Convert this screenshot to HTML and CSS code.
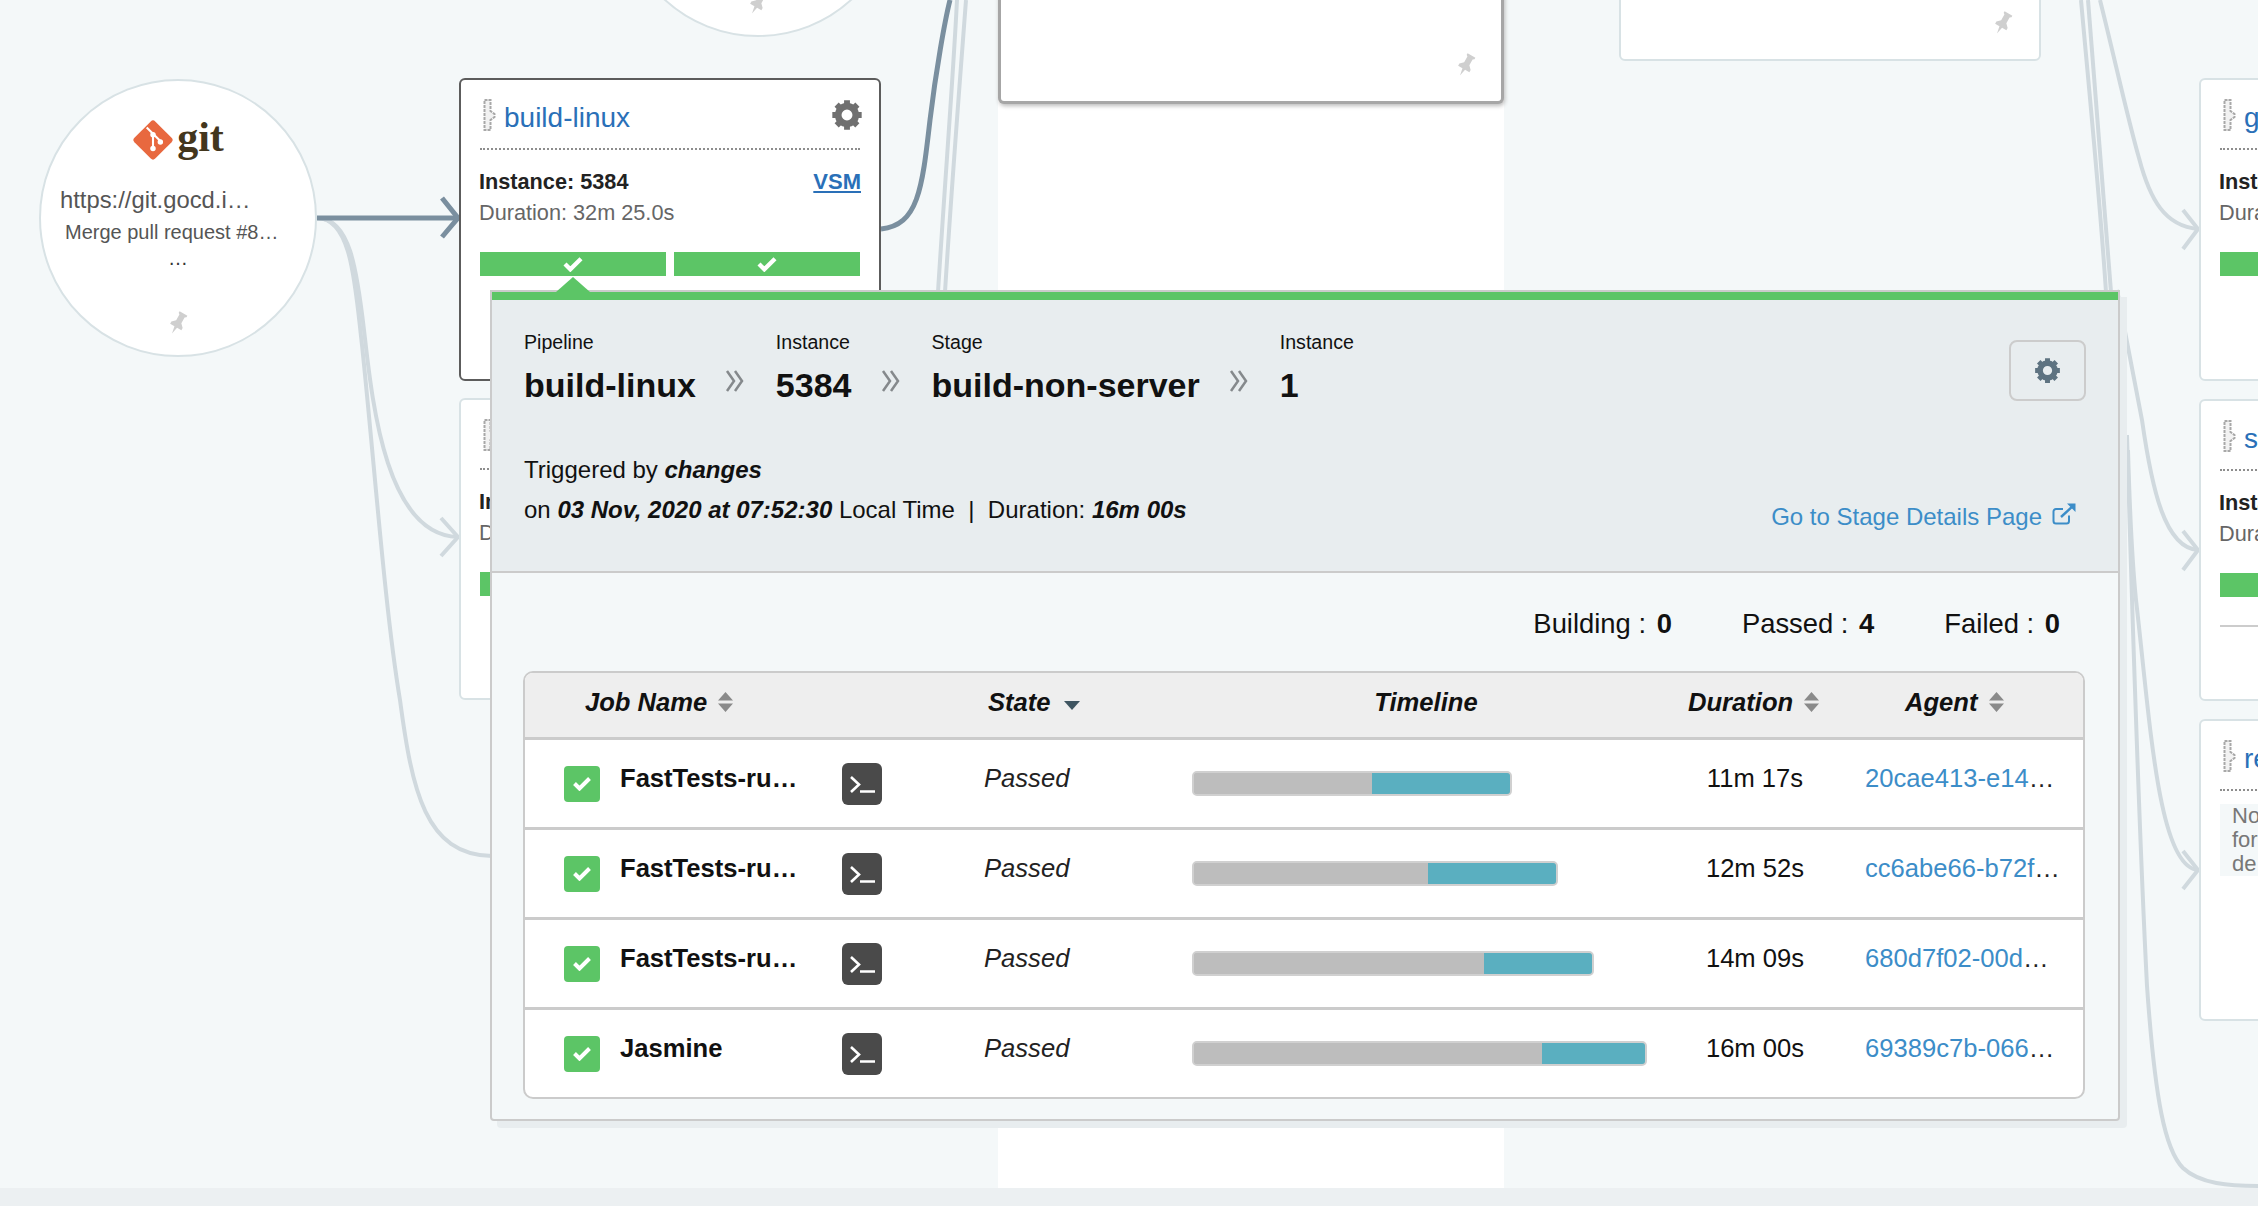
FILE: index.html
```html
<!DOCTYPE html>
<html lang="en">

<head>
  <meta charset="UTF-8" />
  <title>Value Stream Map</title>
  <link rel="stylesheet" href="styles.css">
</head>

<body>
  <svg class="defs" width="0" height="0">
    <symbol id="cog" viewBox="0 0 24 24">
      <circle cx="12" cy="12" r="6.6" fill="none" stroke="currentColor" stroke-width="5" />
      <g stroke="currentColor" stroke-width="4.4">
        <path d="M12 1v22M1 12h22M4.2 4.2l15.6 15.6M19.800 4.2L4.200 19.800" stroke-dasharray="5 12 5" />
      </g>
    </symbol>
    <symbol id="pin" viewBox="0 0 24 24">
      <path d="M7.500 1h9v1.800l-1.500 1.200v6.500l3.500 3.500v2.500h-5l-1.500 7.500-1.500-7.500h-5V14l3.500-3.500V4L7.500 2.800z" fill="currentColor" />
    </symbol>
    <symbol id="pipe" viewBox="0 0 13 32">
      <path d="M1.500 1h6v11l4 3v3l-4 3v10h-6z" fill="#f2f2f2" stroke="#a8a8a8" stroke-width="2" stroke-dasharray="3 1" />
    </symbol>
    <symbol id="check" viewBox="0 0 20 15">
      <path d="M2.500 7.500l5 5 10-10" fill="none" stroke="#fff" stroke-width="4" />
    </symbol>
    <symbol id="sort" viewBox="0 0 15 20">
      <path d="M7.500 0L15 8.500H0zM7.500 20L0 11.500h15z" fill="#8a8a8a" />
    </symbol>
    <symbol id="console" viewBox="0 0 40 42">
      <path d="M9 14l8 7.500-8 7.500M18 28.500h15" fill="none" stroke="#fff" stroke-width="2.600" />
    </symbol>
    <symbol id="chevrons" viewBox="0 0 20 24">
      <path d="M2 2l7 10-7 10M10 2l7 10-7 10" fill="none" stroke="#85898c" stroke-width="2.500" />
    </symbol>
  </svg>

  <div class="canvas">
    <div class="lane"></div>

    <svg class="edges" width="2258" height="1188">
      <g class="edge-light">
        <path d="M957 0C953 80 945 180 938 292" />
        <path d="M966 0C960 80 952 180 945 292" />
        <path d="M317 218C350 218 357 270 364 330C372 400 385 535 458 537" />
        <path d="M317 218C352 218 355 285 362 345C375 470 385 610 400 700C412 790 425 855 492 856" />
        <path d="M2081 0C2090 100 2100 200 2106 292" />
        <path d="M2088 0C2096 100 2104 200 2111 292" />
        <path d="M2100 0C2115 60 2128 120 2139 158C2150 200 2165 226 2198 229" />
        <path d="M2117 290C2125 330 2132 370 2142 420C2152 490 2165 548 2198 550" />
        <path d="M2128 450C2130 520 2133 570 2136 600C2150 720 2158 868 2198 870" />
        <path d="M2127 435C2133 640 2140 850 2147 986C2155 1100 2165 1150 2183 1168C2200 1184 2230 1186 2258 1186" />
        <path d="M441 518L458 537L441 556" />
        <path d="M2183 210L2198 229L2183 249" />
        <path d="M2183 531L2198 550L2183 570" />
        <path d="M2183 851L2198 870L2183 889" />
      </g>
      <g class="edge-dark">
        <path d="M881 229C918 225 922 190 930 120C936 70 945 20 950 0" />
        <path d="M317 218H458" />
        <path d="M442 198L458 218L442 237" />
      </g>
    </svg>

    <div class="circle circle-top">
      <svg class="pin"><use href="#pin" /></svg>
    </div>

    <div class="circle circle-git">
      <div class="git-logo">
        <svg class="git-mark" viewBox="0 0 40 40">
          <rect x="6" y="6" width="28" height="28" rx="3" transform="rotate(45 20 20)" fill="#e8683f" />
          <path d="M14 8l6 6M20 14v14M20 14l7 7" stroke="#fff" stroke-width="2" fill="none" />
          <circle cx="20" cy="15" r="2.600" fill="#fff" />
          <circle cx="20" cy="28" r="2.600" fill="#fff" />
          <circle cx="27" cy="22" r="2.600" fill="#fff" />
        </svg>
        <span class="git-word">git</span>
      </div>
      <div class="git-url">https://git.gocd.i…</div>
      <div class="git-commit">Merge pull request #8…</div>
      <div class="git-more">…</div>
      <svg class="pin"><use href="#pin" /></svg>
    </div>

    <div class="card card-build card-active">
      <div class="card-head">
        <svg class="pipe-icon"><use href="#pipe" /></svg>
        <a class="card-name">build-linux</a>
        <svg class="card-gear"><use href="#cog" /></svg>
      </div>
      <div class="card-info">
        <div class="card-line"><b>Instance: 5384</b><a class="vsm">VSM</a></div>
        <div class="card-line">Duration: 32m 25.0s</div>
      </div>
      <div class="stages">
        <div class="stage"><svg class="stage-check"><use href="#check" /></svg></div>
        <div class="stage"><svg class="stage-check"><use href="#check" /></svg></div>
      </div>
    </div>

    <div class="card card-below">
      <div class="card-head">
        <svg class="pipe-icon"><use href="#pipe" /></svg>
      </div>
      <div class="card-info">
        <div class="card-line"><b>Instance</b></div>
        <div class="card-line">Duration</div>
      </div>
      <div class="stages">
        <div class="stage"></div>
      </div>
    </div>

    <div class="card card-mid">
      <svg class="pin"><use href="#pin" /></svg>
    </div>
    <div class="card card-upper">
      <svg class="pin"><use href="#pin" /></svg>
    </div>

    <div class="card card-r1">
      <div class="card-head">
        <svg class="pipe-icon"><use href="#pipe" /></svg>
        <a class="card-name">g</a>
      </div>
      <div class="card-info">
        <div class="card-line"><b>Instance</b></div>
        <div class="card-line">Duration</div>
      </div>
      <div class="stages">
        <div class="stage"></div>
      </div>
    </div>

    <div class="card card-r2">
      <div class="card-head">
        <svg class="pipe-icon"><use href="#pipe" /></svg>
        <a class="card-name">s</a>
      </div>
      <div class="card-info">
        <div class="card-line"><b>Instance</b></div>
        <div class="card-line">Duration</div>
      </div>
      <div class="stages">
        <div class="stage"></div>
      </div>
      <div class="card-rule"></div>
    </div>

    <div class="card card-r3">
      <div class="card-head">
        <svg class="pipe-icon"><use href="#pipe" /></svg>
        <a class="card-name">re</a>
      </div>
      <div class="card-note">No<br />for<br />de</div>
    </div>

    <div class="popup">
      <div class="popup-arrow"></div>
      <div class="popup-head">
        <div class="head-left">
          <div class="crumbs">
            <div class="crumb"><span class="crumb-label">Pipeline</span><span class="crumb-value">build-linux</span></div>
            <svg class="crumb-sep"><use href="#chevrons" /></svg>
            <div class="crumb"><span class="crumb-label">Instance</span><span class="crumb-value">5384</span></div>
            <svg class="crumb-sep"><use href="#chevrons" /></svg>
            <div class="crumb"><span class="crumb-label">Stage</span><span class="crumb-value">build-non-server</span></div>
            <svg class="crumb-sep"><use href="#chevrons" /></svg>
            <div class="crumb"><span class="crumb-label">Instance</span><span class="crumb-value">1</span></div>
          </div>
          <div class="trigger">Triggered by <b><i>changes</i></b></div>
          <div class="trigger trigger-time">on <b><i>03 Nov, 2020 at 07:52:30</i></b> Local Time&nbsp; |&nbsp; Duration: <b><i>16m 00s</i></b></div>
        </div>
        <div class="head-right">
          <button class="gear-btn"><svg class="btn-cog"><use href="#cog" /></svg></button>
          <a class="stage-link">Go to Stage Details Page
            <svg class="ext-icon" viewBox="0 0 24 22">
              <path d="M17 12.500V18a2.500 2.500 0 0 1-2.500 2.500H4A2.500 2.500 0 0 1 1.500 18V8.500A2.500 2.500 0 0 1 4 6h7" fill="none" stroke="currentColor" stroke-width="2" />
              <path d="M9 14L22 2" fill="none" stroke="currentColor" stroke-width="2.400" />
              <path d="M15 0.500h8.500V9z" fill="currentColor" />
            </svg>
          </a>
        </div>
      </div>

      <div class="popup-body">
        <div class="stats">
          <span>Building : <b>0</b></span>
          <span>Passed : <b>4</b></span>
          <span>Failed : <b>0</b></span>
        </div>

        <div class="jobs">
          <div class="jobs-row jobs-header">
            <div class="th th-job">Job Name <svg class="sort"><use href="#sort" /></svg></div>
            <div class="th th-state">State <span class="sort-down"></span></div>
            <div class="th th-timeline">Timeline</div>
            <div class="th th-duration">Duration <svg class="sort"><use href="#sort" /></svg></div>
            <div class="th th-agent">Agent <svg class="sort"><use href="#sort" /></svg></div>
          </div>

          <div class="jobs-row job">
            <div class="job-name">
              <span class="job-check"><svg class="row-check"><use href="#check" /></svg></span>
              <b class="job-title">FastTests-ru…</b>
              <svg class="job-console"><use href="#console" /></svg>
            </div>
            <div class="job-state">Passed</div>
            <div class="bar bar-1"><span class="bar-wait"></span><span class="bar-run"></span></div>
            <div class="job-duration">11m 17s</div>
            <a class="job-agent">20cae413-e14<span class="dots">…</span></a>
          </div>

          <div class="jobs-row job">
            <div class="job-name">
              <span class="job-check"><svg class="row-check"><use href="#check" /></svg></span>
              <b class="job-title">FastTests-ru…</b>
              <svg class="job-console"><use href="#console" /></svg>
            </div>
            <div class="job-state">Passed</div>
            <div class="bar bar-2"><span class="bar-wait"></span><span class="bar-run"></span></div>
            <div class="job-duration">12m 52s</div>
            <a class="job-agent">cc6abe66-b72f<span class="dots">…</span></a>
          </div>

          <div class="jobs-row job">
            <div class="job-name">
              <span class="job-check"><svg class="row-check"><use href="#check" /></svg></span>
              <b class="job-title">FastTests-ru…</b>
              <svg class="job-console"><use href="#console" /></svg>
            </div>
            <div class="job-state">Passed</div>
            <div class="bar bar-3"><span class="bar-wait"></span><span class="bar-run"></span></div>
            <div class="job-duration">14m 09s</div>
            <a class="job-agent">680d7f02-00d<span class="dots">…</span></a>
          </div>

          <div class="jobs-row job">
            <div class="job-name">
              <span class="job-check"><svg class="row-check"><use href="#check" /></svg></span>
              <b class="job-title">Jasmine</b>
              <svg class="job-console"><use href="#console" /></svg>
            </div>
            <div class="job-state">Passed</div>
            <div class="bar bar-4"><span class="bar-wait"></span><span class="bar-run"></span></div>
            <div class="job-duration">16m 00s</div>
            <a class="job-agent">69389c7b-066<span class="dots">…</span></a>
          </div>
        </div>
      </div>
    </div>
  </div>

  <div class="footer-bar"></div>
</body>

</html>
```

FILE: styles.css
```css
* {
  box-sizing: border-box;
}

body {
  margin: 0;
  font-family: "Liberation Sans", Arial, sans-serif;
  color: #111;
  background-color: #f4f8f9;
  overflow: hidden;
}

.defs {
  position: absolute;
}

.canvas {
  position: relative;
  height: 1188px;
  overflow: hidden;
  background-color: #f4f8f9;
}

.footer-bar {
  height: 18px;
  background-color: #ecf0f2;
}

.lane {
  position: absolute;
  left: 998px;
  top: 0;
  width: 506px;
  height: 1188px;
  background-color: #fff;
}

.edges {
  position: absolute;
  left: 0;
  top: 0;
}

.edges path {
  fill: none;
}

.edge-light path {
  stroke: #d0d9de;
  stroke-width: 4;
}

.edge-dark path {
  stroke: #7a8f9f;
  stroke-width: 5;
}

/* nodes */

.pin {
  width: 24px;
  height: 24px;
  color: #cfcfcf;
  transform: rotate(30deg);
}

.circle {
  position: absolute;
  width: 278px;
  height: 278px;
  border: 2px solid #d8e2e5;
  border-radius: 50%;
  background-color: #fff;
  display: flex;
  flex-direction: column;
  align-items: center;
  padding-bottom: 20px;
}

.circle .pin {
  margin-top: auto;
}

.circle-top {
  left: 619px;
  top: -241px;
}

.circle-git {
  left: 39px;
  top: 79px;
  padding-top: 38px;
}

.git-logo {
  display: flex;
  align-items: center;
  gap: 3px;
  height: 42px;
}

.git-mark {
  width: 42px;
  height: 42px;
}

.git-word {
  font-family: "Liberation Serif", serif;
  font-weight: bold;
  font-size: 42px;
  line-height: 42px;
  color: #43361d;
  margin-top: -6px;
}

.git-url {
  align-self: flex-start;
  margin: 23px 0 0 19px;
  font-size: 23.8px;
  line-height: 32px;
  color: #555;
}

.git-commit {
  align-self: flex-start;
  margin: 1px 0 0 24px;
  font-size: 20px;
  line-height: 30px;
  color: #555;
}

.git-more {
  font-size: 20px;
  line-height: 20px;
  color: #333;
  margin-top: 1px;
}

.card {
  position: absolute;
  width: 422px;
  height: 302px;
  border: 2px solid #d8e2e5;
  border-radius: 6px;
  background-color: #fff;
  padding: 20px 19px;
  display: flex;
  flex-direction: column;
}

.card-active {
  border-color: #5c5c5c;
}

.card-build {
  left: 459px;
  top: 78px;
  height: 303px;
}

.card-below {
  left: 459px;
  top: 398px;
}

.card-mid {
  left: 998px;
  top: -200px;
  width: 506px;
  height: 304px;
  border: 3px solid #a6a6a6;
  border-top: 0;
  box-shadow: 1px 2px 4px #bbb;
  align-items: flex-end;
  justify-content: flex-end;
  padding: 0 23px 24px;
}

.card-upper {
  left: 1619px;
  top: -200px;
  height: 261px;
  align-items: flex-end;
  justify-content: flex-end;
  padding: 0 24px 24px;
}

.card-r1 {
  left: 2199px;
  top: 78px;
  height: 303px;
}

.card-r2 {
  left: 2199px;
  top: 399px;
}

.card-r3 {
  left: 2199px;
  top: 719px;
}

.card-head {
  display: flex;
  align-items: center;
  gap: 8px;
  height: 50px;
  padding: 0 0 18px 3px;
  border-bottom: 2px dotted #8d8d8d;
}

.pipe-icon {
  width: 13px;
  height: 32px;
  flex: none;
}

.card-name {
  font-size: 28px;
  color: #2a70b8;
  margin-top: 5px;
}

.card-gear {
  width: 32px;
  height: 32px;
  margin: 0 -3px 0 auto;
  color: #707070;
}

.card-info {
  margin-top: 17px;
  margin-left: -1px;
  font-size: 21.7px;
  color: #666;
}

.card-line {
  display: flex;
  justify-content: space-between;
  height: 31px;
  line-height: 30px;
}

.card-line b {
  color: #222;
}

.vsm {
  font-size: 22px;
  font-weight: bold;
  color: #2a70b8;
  text-decoration: underline;
  margin-right: -1px;
}

.stages {
  display: flex;
  gap: 8px;
  margin-top: 23px;
}

.stage {
  flex: 1;
  height: 24px;
  background-color: #5cc566;
  display: flex;
  align-items: center;
  justify-content: center;
}

.stage-check {
  width: 22px;
  height: 16px;
}

.card-rule {
  height: 2px;
  margin-top: 28px;
  background-color: #ccc;
}

.card-note {
  margin-top: 13px;
  padding-left: 12px;
  height: 72px;
  background-color: #f4f8f9;
  color: #777;
  font-size: 22px;
  line-height: 24px;
}

/* popup */

.popup {
  position: absolute;
  left: 490px;
  top: 290px;
  width: 1630px;
  height: 831px;
  border: 2px solid #cbcbcb;
  border-radius: 0 0 4px 4px;
  background-color: #f4f8f9;
  box-shadow: 7px 7px 0 #e8edef;
  display: flex;
  flex-direction: column;
}

.popup-arrow {
  position: absolute;
  left: 64px;
  top: -15px;
  width: 0;
  height: 0;
  border-left: 17px solid transparent;
  border-right: 17px solid transparent;
  border-bottom: 15px solid #5cc566;
}

.popup-head {
  height: 281px;
  flex: none;
  background-color: #e8edef;
  border-top: 8px solid #5cc566;
  border-bottom: 2px solid #cbcbcb;
  padding: 29px 32px 0;
  display: flex;
  justify-content: space-between;
}

.crumbs {
  display: flex;
  align-items: flex-start;
}

.crumb {
  display: flex;
  flex-direction: column;
}

.crumb-label {
  font-size: 19.6px;
  line-height: 26px;
}

.crumb-value {
  margin-top: 10px;
  font-size: 34px;
  line-height: 40px;
  font-weight: bold;
}

.crumb-sep {
  width: 20px;
  height: 24px;
  margin: 40px 31px 0 29px;
}

.trigger {
  margin-top: 50px;
  font-size: 24px;
  line-height: 30px;
}

.trigger-time {
  margin-top: 10px;
}

.head-right {
  display: flex;
  flex-direction: column;
  align-items: flex-end;
  padding-top: 11px;
}

.gear-btn {
  width: 77px;
  height: 61px;
  border: 2px solid #ccc;
  border-radius: 8px;
  background-color: #e8edef;
  display: flex;
  align-items: center;
  justify-content: center;
  padding: 0;
}

.btn-cog {
  width: 27px;
  height: 27px;
  color: #5e7381;
}

.stage-link {
  margin: 101px 10px 0 0;
  display: flex;
  align-items: center;
  gap: 10px;
  font-size: 24px;
  line-height: 30px;
  color: #3c8dc8;
}

.ext-icon {
  width: 24px;
  height: 22px;
  margin-top: -6px;
}

.popup-body {
  padding: 32px 33px 0 31px;
}

.stats {
  display: flex;
  justify-content: flex-end;
  gap: 70px;
  padding-right: 25px;
  font-size: 27.4px;
  line-height: 38px;
}

.stats b {
  margin-left: 3px;
}

.jobs {
  margin-top: 28px;
  height: 428px;
  border: 2px solid #cbcbcb;
  border-radius: 10px;
  overflow: hidden;
  background-color: #fff;
}

.jobs-row {
  display: grid;
  grid-template-columns: 435px 232px 468px 190px 1fr;
  align-items: center;
  font-size: 25.6px;
}

.jobs-header {
  height: 64px;
  background-color: #eee;
}

.th {
  font-weight: bold;
  font-style: italic;
  display: flex;
  align-items: center;
  gap: 11px;
  padding-bottom: 6px;
}

.th-job {
  padding-left: 60px;
}

.th-state {
  padding-left: 28px;
}

.th-timeline {
  justify-content: center;
}

.th-duration {
  padding-left: 28px;
}

.th-agent {
  padding-left: 55px;
}

.sort {
  width: 15px;
  height: 20px;
}

.sort-down {
  width: 0;
  height: 0;
  margin: 6px 0 0 2px;
  border-left: 8px solid transparent;
  border-right: 8px solid transparent;
  border-top: 9px solid #3f5561;
}

.job {
  height: 90px;
  border-top: 3px solid #cbcbcb;
}

.job-name {
  display: flex;
  align-items: center;
  padding-left: 39px;
}

.job-check {
  width: 36px;
  height: 36px;
  border-radius: 4px;
  background-color: #5cc566;
  display: flex;
  align-items: center;
  justify-content: center;
  flex: none;
}

.row-check {
  width: 20px;
  height: 15px;
}

.job-title {
  width: 222px;
  margin-left: 20px;
  padding-bottom: 10px;
}

.job-console {
  width: 40px;
  height: 42px;
  border-radius: 6px;
  background-color: #4a4a4a;
  flex: none;
}

.job-state {
  padding: 0 0 10px 24px;
  font-style: italic;
  color: #222;
}

.bar {
  display: flex;
  height: 25px;
  border: 2px solid #d0d0d0;
  border-radius: 5px;
  overflow: hidden;
  background-color: #bdbdbd;
}

.bar-wait {
  background-color: #bdbdbd;
}

.bar-run {
  flex: 1;
  background-color: #5aafc0;
}

/* widths from the job times */
.bar-1 {
  width: 320px;
}

.bar-1 .bar-wait {
  width: 178px;
}

.bar-2 {
  width: 366px;
}

.bar-2 .bar-wait {
  width: 234px;
}

.bar-3 {
  width: 402px;
}

.bar-3 .bar-wait {
  width: 290px;
}

.bar-4 {
  width: 455px;
}

.bar-4 .bar-wait {
  width: 348px;
}

.job-duration {
  text-align: center;
  padding-bottom: 10px;
}

.job-agent {
  padding: 0 0 10px 15px;
  color: #3c8dc8;
  white-space: nowrap;
}

.dots {
  color: #222;
}
```
